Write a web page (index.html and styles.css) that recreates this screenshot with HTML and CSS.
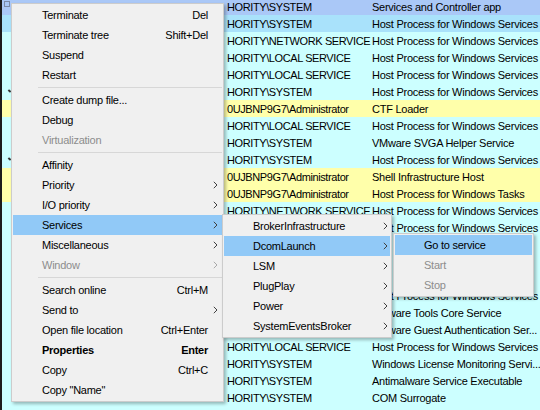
FILE: index.html
```html
<!DOCTYPE html>
<html>
<head>
<meta charset="utf-8">
<link rel="stylesheet" href="styles.css">
</head>
<body>
<div class="screen">
  <div class="list">
    <div class="row sys"><span class="tree"><span class="box"></span></span><span class="user">HORITY\SYSTEM</span><span class="desc">Services and Controller app</span></div>
    <div class="row sel"><span class="tree"></span><span class="user">HORITY\SYSTEM</span><span class="desc">Host Process for Windows Services</span></div>
    <div class="row svc"><span class="tree"></span><span class="user">HORITY\NETWORK SERVICE</span><span class="desc">Host Process for Windows Services</span></div>
    <div class="row svc"><span class="tree"></span><span class="user">HORITY\LOCAL SERVICE</span><span class="desc">Host Process for Windows Services</span></div>
    <div class="row svc"><span class="tree"></span><span class="user">HORITY\LOCAL SERVICE</span><span class="desc">Host Process for Windows Services</span></div>
    <div class="row svc"><span class="tree"><span class="mark"></span></span><span class="user">HORITY\SYSTEM</span><span class="desc">Host Process for Windows Services</span></div>
    <div class="row own"><span class="tree"></span><span class="user">0UJBNP9G7\Administrator</span><span class="desc">CTF Loader</span></div>
    <div class="row svc"><span class="tree"></span><span class="user">HORITY\LOCAL SERVICE</span><span class="desc">Host Process for Windows Services</span></div>
    <div class="row svc"><span class="tree"></span><span class="user">HORITY\SYSTEM</span><span class="desc">VMware SVGA Helper Service</span></div>
    <div class="row svc"><span class="tree"><span class="mark"></span></span><span class="user">HORITY\SYSTEM</span><span class="desc">Host Process for Windows Services</span></div>
    <div class="row own"><span class="tree"></span><span class="user">0UJBNP9G7\Administrator</span><span class="desc">Shell Infrastructure Host</span></div>
    <div class="row own"><span class="tree"></span><span class="user">0UJBNP9G7\Administrator</span><span class="desc">Host Process for Windows Tasks</span></div>
    <div class="row svc"><span class="tree"></span><span class="user">HORITY\NETWORK SERVICE</span><span class="desc">Host Process for Windows Services</span></div>
    <div class="row svc"><span class="tree"></span><span class="user"></span><span class="desc">Host Process for Windows Services</span></div>
    <div class="row svc"><span class="tree"></span><span class="user"></span><span class="desc"></span></div>
    <div class="row svc"><span class="tree"></span><span class="user"></span><span class="desc"></span></div>
    <div class="row svc"><span class="tree"></span><span class="user"></span><span class="desc"></span></div>
    <div class="row svc"><span class="tree"></span><span class="user"></span><span class="desc">Host Process for Windows Services</span></div>
    <div class="row svc"><span class="tree"></span><span class="user"></span><span class="desc">VMware Tools Core Service</span></div>
    <div class="row svc"><span class="tree"></span><span class="user"></span><span class="desc">VMware Guest Authentication Ser...</span></div>
    <div class="row svc"><span class="tree"></span><span class="user">HORITY\LOCAL SERVICE</span><span class="desc">Host Process for Windows Services</span></div>
    <div class="row svc"><span class="tree"></span><span class="user">HORITY\SYSTEM</span><span class="desc">Windows License Monitoring Servi...</span></div>
    <div class="row svc"><span class="tree"></span><span class="user">HORITY\SYSTEM</span><span class="desc">Antimalware Service Executable</span></div>
    <div class="row svc"><span class="tree"></span><span class="user">HORITY\SYSTEM</span><span class="desc">COM Surrogate</span></div>
    <div class="row svc"><span class="tree"></span><span class="user"></span><span class="desc"></span></div>
  </div>

  <div class="menu menu-main">
    <div class="item"><span class="label">Terminate</span><span class="key">Del</span><span class="arr"></span></div>
    <div class="item"><span class="label">Terminate tree</span><span class="key">Shift+Del</span><span class="arr"></span></div>
    <div class="item"><span class="label">Suspend</span><span class="key"></span><span class="arr"></span></div>
    <div class="item"><span class="label">Restart</span><span class="key"></span><span class="arr"></span></div>
    <div class="sep"></div>
    <div class="item"><span class="label">Create dump file...</span><span class="key"></span><span class="arr"></span></div>
    <div class="item"><span class="label">Debug</span><span class="key"></span><span class="arr"></span></div>
    <div class="item disabled"><span class="label">Virtualization</span><span class="key"></span><span class="arr"></span></div>
    <div class="sep"></div>
    <div class="item"><span class="label">Affinity</span><span class="key"></span><span class="arr"></span></div>
    <div class="item"><span class="label">Priority</span><span class="key"></span><span class="arr"><svg width="5" height="8" viewBox="0 0 5 8"><polyline points="0.8,0.8 4,4 0.8,7.2" /></svg></span></div>
    <div class="item"><span class="label">I/O priority</span><span class="key"></span><span class="arr"><svg width="5" height="8" viewBox="0 0 5 8"><polyline points="0.8,0.8 4,4 0.8,7.2" /></svg></span></div>
    <div class="item active"><span class="label">Services</span><span class="key"></span><span class="arr"><svg width="5" height="8" viewBox="0 0 5 8"><polyline points="0.8,0.8 4,4 0.8,7.2" /></svg></span></div>
    <div class="item"><span class="label">Miscellaneous</span><span class="key"></span><span class="arr"><svg width="5" height="8" viewBox="0 0 5 8"><polyline points="0.8,0.8 4,4 0.8,7.2" /></svg></span></div>
    <div class="item disabled"><span class="label">Window</span><span class="key"></span><span class="arr"><svg width="5" height="8" viewBox="0 0 5 8"><polyline points="0.8,0.8 4,4 0.8,7.2" /></svg></span></div>
    <div class="sep"></div>
    <div class="item"><span class="label">Search online</span><span class="key">Ctrl+M</span><span class="arr"></span></div>
    <div class="item"><span class="label">Send to</span><span class="key"></span><span class="arr"><svg width="5" height="8" viewBox="0 0 5 8"><polyline points="0.8,0.8 4,4 0.8,7.2" /></svg></span></div>
    <div class="item"><span class="label">Open file location</span><span class="key">Ctrl+Enter</span><span class="arr"></span></div>
    <div class="item bold"><span class="label">Properties</span><span class="key">Enter</span><span class="arr"></span></div>
    <div class="item"><span class="label">Copy</span><span class="key">Ctrl+C</span><span class="arr"></span></div>
    <div class="item"><span class="label">Copy "Name"</span><span class="key"></span><span class="arr"></span></div>
  </div>

  <div class="menu menu-services">
    <div class="item"><span class="label">BrokerInfrastructure</span><span class="key"></span><span class="arr"><svg width="5" height="8" viewBox="0 0 5 8"><polyline points="0.8,0.8 4,4 0.8,7.2" /></svg></span></div>
    <div class="item active"><span class="label">DcomLaunch</span><span class="key"></span><span class="arr"><svg width="5" height="8" viewBox="0 0 5 8"><polyline points="0.8,0.8 4,4 0.8,7.2" /></svg></span></div>
    <div class="item"><span class="label">LSM</span><span class="key"></span><span class="arr"><svg width="5" height="8" viewBox="0 0 5 8"><polyline points="0.8,0.8 4,4 0.8,7.2" /></svg></span></div>
    <div class="item"><span class="label">PlugPlay</span><span class="key"></span><span class="arr"><svg width="5" height="8" viewBox="0 0 5 8"><polyline points="0.8,0.8 4,4 0.8,7.2" /></svg></span></div>
    <div class="item"><span class="label">Power</span><span class="key"></span><span class="arr"><svg width="5" height="8" viewBox="0 0 5 8"><polyline points="0.8,0.8 4,4 0.8,7.2" /></svg></span></div>
    <div class="item"><span class="label">SystemEventsBroker</span><span class="key"></span><span class="arr"><svg width="5" height="8" viewBox="0 0 5 8"><polyline points="0.8,0.8 4,4 0.8,7.2" /></svg></span></div>
  </div>

  <div class="menu menu-actions">
    <div class="item active"><span class="label">Go to service</span><span class="key"></span><span class="arr"></span></div>
    <div class="item disabled"><span class="label">Start</span><span class="key"></span><span class="arr"></span></div>
    <div class="item disabled"><span class="label">Stop</span><span class="key"></span><span class="arr"></span></div>
  </div>
</div>
</body>
</html>
```

FILE: styles.css
```css
html, body {
  margin: 0;
  padding: 0;
  background: #ccffff;
}

body {
  font-family: "Liberation Sans", Arial, sans-serif;
  font-size: 11px;
  letter-spacing: -0.25px;
  color: #000;
}

.screen {
  position: relative;
  width: 540px;
  height: 410px;
  overflow: hidden;
}

.list {
  margin-top: -2px;
}

.row {
  display: flex;
  height: 17px;
  align-items: center;
  white-space: nowrap;
  background: #ccffff;
}

.row.sys { background: #aac8f7; }
.row.sel { background: #a9e2fb; }
.row.own { background: #ffffaa; }
.row.svc { background: #ccffff; }

.tree {
  flex: none;
  width: 224px;
  align-self: stretch;
  border-left: 2px solid #1c1c1c;
  display: flex;
  align-items: center;
}

.box {
  width: 4px;
  height: 4px;
  margin-left: 2px;
  margin-top: -6px;
  border: 1px solid #7a8aa8;
}

.mark {
  width: 3px;
  height: 2px;
  margin-left: 6px;
  margin-top: -2px;
  background: #333;
  transform: rotate(40deg);
}

.user {
  flex: none;
  width: 144px;
  padding-left: 1px;
  overflow: hidden;
  letter-spacing: -0.4px;
}

.desc {
  flex: 1;
  padding-left: 1px;
  overflow: hidden;
}

/* Menus */
.menu {
  position: absolute;
  box-sizing: border-box;
  background: #f0f0f0;
  border: 1px solid #cccccc;
  padding: 1px;
  box-shadow: 2px 2px 3px rgba(0, 0, 0, 0.28);
}

.menu-main {
  left: 11px;
  top: 3px;
  width: 213px;
}

.menu-services {
  left: 222px;
  top: 214px;
  width: 170px;
}

.menu-actions {
  left: 393px;
  top: 233px;
  width: 141px;
}

.item {
  display: grid;
  grid-template-columns: 1fr auto 14px;
  align-items: center;
  height: 20px;
  padding-left: 29px;
  white-space: nowrap;
}

.menu-services .item {
  grid-template-columns: 1fr auto 10px;
}

.item.active {
  background: #91c9f7;
}

.item.disabled {
  color: #8d8d8d;
}

.item.bold {
  font-weight: bold;
}

.key {
  text-align: right;
}

.arr {
  display: flex;
  justify-content: center;
  align-items: center;
}

.arr svg {
  display: block;
  fill: none;
  stroke: #404040;
  stroke-width: 1;
}

.item.disabled .arr svg {
  stroke: #a8a8a8;
}

.sep {
  height: 5px;
  display: flex;
  align-items: center;
  padding-left: 25px;
}

.sep::before {
  content: "";
  flex: 1;
  height: 1px;
  background: #d7d7d7;
}
```
